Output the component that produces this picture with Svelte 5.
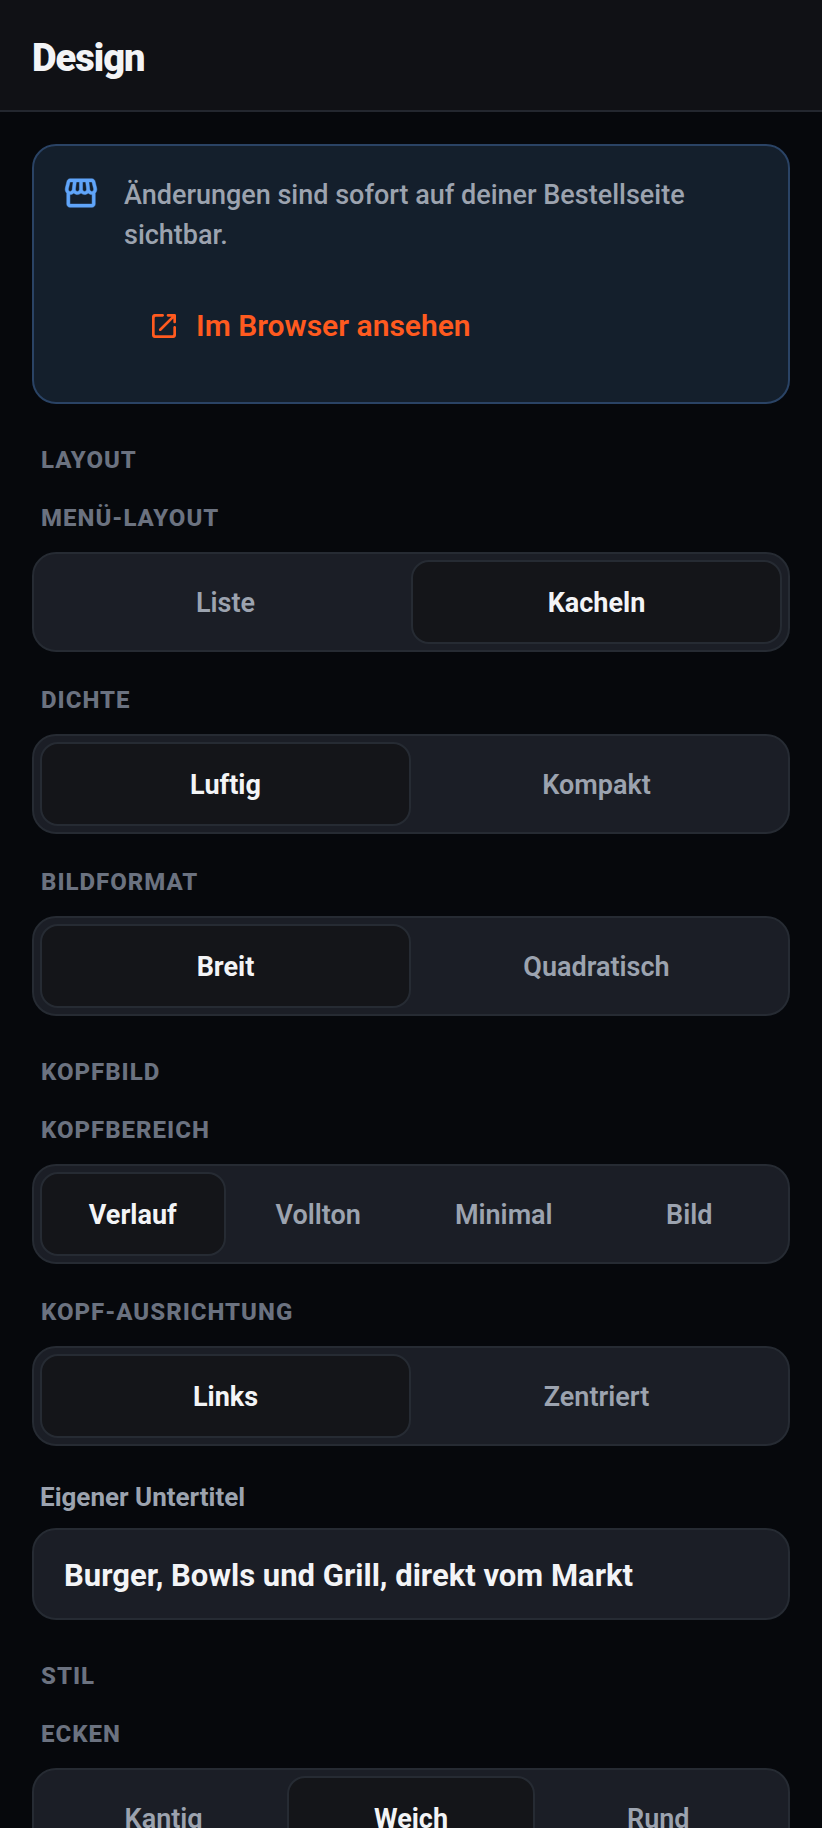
<script>
  let subtitle = $state('Burger, Bowls und Grill, direkt vom Markt');

  let sections = $state([
    {
      title: 'Layout',
      groups: [
        { id: 'menu', label: 'Menü-Layout', options: ['Liste', 'Kacheln'], value: 'Kacheln' },
        { id: 'density', label: 'Dichte', options: ['Luftig', 'Kompakt'], value: 'Luftig' },
        { id: 'ratio', label: 'Bildformat', options: ['Breit', 'Quadratisch'], value: 'Breit' }
      ]
    },
    {
      title: 'Kopfbild',
      hasSubtitle: true,
      groups: [
        { id: 'hero', label: 'Kopfbereich', options: ['Verlauf', 'Vollton', 'Minimal', 'Bild'], value: 'Verlauf' },
        { id: 'align', label: 'Kopf-Ausrichtung', options: ['Links', 'Zentriert'], value: 'Links' }
      ]
    },
    {
      title: 'Stil',
      groups: [
        { id: 'corners', label: 'Ecken', options: ['Kantig', 'Weich', 'Rund'], value: 'Weich' }
      ]
    }
  ]);
</script>

<header>
  <h1>Design</h1>
</header>

<main>
  <aside class="notice">
    <svg class="store" viewBox="0 0 24 24" aria-hidden="true">
      <path d="M21.9 8.89l-1.05-4.37c-.22-.9-1-1.52-1.91-1.52H5.05c-.9 0-1.69.63-1.9 1.52L2.1 8.89c-.24 1.02-.02 2.06.62 2.88.08.11.19.19.28.29V19c0 1.1.9 2 2 2h14c1.1 0 2-.9 2-2v-6.94c.09-.09.2-.18.28-.28.64-.82.87-1.87.62-2.89zm-2.99-3.9l1.05 4.37c.1.42.01.84-.25 1.17-.14.18-.44.47-.94.47-.61 0-1.14-.49-1.21-1.14L16.98 5l1.93-.01zM13 5h1.96l.54 4.52c.05.39-.07.78-.33 1.07-.22.26-.54.41-.95.41-.67 0-1.22-.59-1.22-1.31V5zM8.49 9.52L9.04 5H11v4.69c0 .72-.55 1.31-1.29 1.31-.34 0-.65-.15-.89-.41-.25-.29-.37-.68-.33-1.07zm-4.45-.16L5.05 5h1.97l-.58 4.86c-.08.65-.6 1.14-1.21 1.14-.49 0-.8-.29-.93-.47-.27-.32-.36-.75-.26-1.17zM5 19v-6.03c.08.01.15.03.23.03.87 0 1.66-.36 2.24-.95.6.6 1.4.95 2.31.95.87 0 1.65-.36 2.23-.93.59.57 1.39.93 2.29.93.84 0 1.64-.35 2.24-.95.58.59 1.37.95 2.24.95.08 0 .15-.02.23-.03V19H5z" />
    </svg>
    <div class="notice-body">
      <p>Änderungen sind sofort auf deiner Bestellseite sichtbar.</p>
      <button type="button" class="open">
        <svg viewBox="0 0 24 24" aria-hidden="true">
          <path d="M18 19H6c-.55 0-1-.45-1-1V6c0-.55.45-1 1-1h5c.55 0 1-.45 1-1s-.45-1-1-1H5c-1.11 0-2 .9-2 2v14c0 1.1.9 2 2 2h14c1.1 0 2-.9 2-2v-6c0-.55-.45-1-1-1s-1 .45-1 1v5c0 .55-.45 1-1 1zM14 4c0 .55.45 1 1 1h2.59l-9.13 9.13c-.39.39-.39 1.02 0 1.41.39.39 1.02.39 1.41 0L19 6.41V9c0 .55.45 1 1 1s1-.45 1-1V4c0-.55-.45-1-1-1h-5c-.55 0-1 .45-1 1z" />
        </svg>
        Im Browser ansehen
      </button>
    </div>
  </aside>

  {#each sections as section}
    <section>
      <h2>{section.title}</h2>
      {#each section.groups as group}
        <div class="group">
          <h3 id="{group.id}-label">{group.label}</h3>
          <div class="segments" role="group" aria-labelledby="{group.id}-label">
            {#each group.options as option}
              <button
                type="button"
                class:active={group.value === option}
                aria-pressed={group.value === option}
                onclick={() => (group.value = option)}>{option}</button>
            {/each}
          </div>
        </div>
      {/each}
      {#if section.hasSubtitle}
        <div class="field">
          <label for="subtitle">Eigener Untertitel</label>
          <input id="subtitle" type="text" bind:value={subtitle} />
        </div>
      {/if}
    </section>
  {/each}
</main>

<style>
  :global(body) {
    background: #06080c;
    color: #f3f4f6;
    font-family: Roboto, sans-serif;
  }

  h1, h2, h3, p {
    margin: 0;
  }

  button, input {
    box-sizing: border-box;
    margin: 0;
    font-family: inherit;
  }

  svg {
    flex: none;
    fill: currentColor;
  }

  header {
    padding: 33px 32px 27px;
    background: #101115;
    border-bottom: 2px solid #23272f;
  }

  h1 {
    font-size: 38px;
    line-height: 50px;
    font-weight: 900;
    letter-spacing: -1px;
  }

  main {
    padding: 32px;
  }

  .notice {
    display: flex;
    gap: 24px;
    padding: 28px;
    background: #141f2c;
    border: 2px solid #2a4365;
    border-radius: 24px;
  }

  .store {
    width: 38px;
    height: 38px;
    color: #60a5fa;
    stroke: currentColor;
    stroke-width: 0.3;
  }

  .notice-body {
    flex: 1;
  }

  p {
    padding-top: 1px;
    color: #9ca3af;
    font-size: 27px;
    line-height: 40px;
    font-weight: 500;
  }

  .open {
    display: flex;
    align-items: center;
    gap: 16px;
    height: 96px;
    margin-top: 23px;
    padding: 0 24px;
    border: 0;
    background: none;
    color: #ff5a1f;
    font-size: 30px;
    line-height: 34px;
    font-weight: 600;
  }

  .open svg {
    width: 32px;
    height: 32px;
  }

  section {
    padding-top: 42px;
  }

  h2, h3 {
    padding: 0 9px;
    color: #6b7280;
    font-size: 24px;
    line-height: 28px;
    font-weight: 800;
    letter-spacing: 1px;
    text-transform: uppercase;
  }

  h2 {
    margin-bottom: 30px;
  }

  h3 {
    margin-bottom: 20px;
  }

  .group + .group, .field {
    margin-top: 34px;
  }

  .segments {
    display: flex;
    padding: 6px;
    background: #1b1e26;
    border: 2px solid #262b33;
    border-radius: 24px;
  }

  .segments button {
    flex: 1 1 0;
    min-width: 0;
    height: 84px;
    padding: 2px 0 0;
    background: none;
    border: 2px solid transparent;
    border-radius: 18px;
    color: #9ca3af;
    font-size: 27px;
    font-weight: 600;
  }

  .segments button.active {
    background: #141519;
    border-color: #262b33;
    color: #f3f4f6;
    font-weight: 700;
  }

  label {
    display: block;
    margin-bottom: 15px;
    padding: 1px 8px 0;
    color: #9ca3af;
    font-size: 26px;
    line-height: 32px;
    font-weight: 700;
  }

  input {
    display: block;
    width: 100%;
    height: 92px;
    padding: 2px 30px 0;
    background: #1b1e26;
    border: 2px solid #262b33;
    border-radius: 24px;
    color: #f3f4f6;
    font-size: 31px;
    font-weight: 700;
  }
</style>
